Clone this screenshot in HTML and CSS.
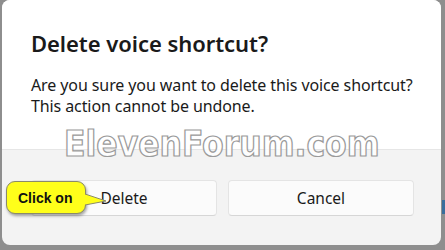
FILE: index.html
```html
<!DOCTYPE html>
<html>
<head>
<meta charset="utf-8">
<link rel="stylesheet" href="styles.css">
</head>
<body>
<div class="backdrop">
  <div class="dialog">
    <div class="content">
      <h1 class="title">Delete voice shortcut?</h1>
      <p class="message">Are you sure you want to delete this voice shortcut?<br>This action cannot be undone.</p>
    </div>
    <div class="footer">
      <button class="btn">Delete</button>
      <button class="btn">Cancel</button>
    </div>
    <div class="watermark">ElevenForum.com</div>
    <div class="callout">
      <span class="callout-text">Click on</span>
      <svg class="callout-tip" width="22" height="20" viewBox="0 0 22 20">
        <path d="M0 3 L21 10 L0 14" fill="#ffff1a" stroke="#8a8a6a" stroke-width="1"/>
      </svg>
    </div>
  </div>
  <div class="side-strip"></div>
</div>
</body>
</html>
```
FILE: styles.css
```css
html, body {
  margin: 0;
  padding: 0;
}
body {
  width: 445px;
  height: 250px;
  overflow: hidden;
  background: #8e8e8e;
  font-family: "Segoe UI", "Noto Sans", sans-serif;
}
.backdrop {
  display: flex;
  padding-left: 2px;
  height: 250px;
  box-sizing: border-box;
  position: relative;
}
.dialog {
  position: relative;
  width: 439px;
  height: 245px;
  border-radius: 8px;
  background: #f3f3f3;
  overflow: hidden;
  display: flex;
  flex-direction: column;
}
.content {
  background: #ffffff;
  height: 150px;
  box-sizing: border-box;
  padding: 28px 10px 0 29px;
  border-bottom: 1px solid #e6e6e6;
}
.title {
  margin: 0;
  font-size: 22px;
  line-height: 30px;
  font-weight: 600;
  color: #1a1a1a;
  letter-spacing: -0.05px;
}
.message {
  margin: 17px 0 0;
  font-size: 16px;
  line-height: 21px;
  color: #1a1a1a;
  white-space: nowrap;
  letter-spacing: -0.1px;
}
.footer {
  display: grid;
  grid-template-columns: 186px 186px;
  gap: 11px;
  padding: 30px 0 0 29px;
}
.btn {
  height: 36px;
  border: 1px solid #e4e4e4;
  border-bottom-color: #d6d6d6;
  border-radius: 4px;
  background: #fbfbfb;
  font-family: "Segoe UI", "Noto Sans", sans-serif;
  font-size: 15.5px;
  color: #1a1a1a;
  padding: 0 0 1px;
}
.watermark {
  position: absolute;
  left: 62px;
  top: 124px;
  font-family: "DejaVu Sans Condensed", "DejaVu Sans", sans-serif;
  font-weight: 700;
  font-size: 35px;
  line-height: 40px;
  color: rgba(255,255,255,0.9);
  -webkit-text-stroke: 1.2px #9a9a9a;
  letter-spacing: 0px;
}
.callout {
  position: absolute;
  left: 4px;
  top: 181px;
  width: 80px;
  height: 33px;
  background: #ffff1a;
  border: 1px solid #8a8a6a;
  border-radius: 9px;
  box-shadow: 1px 2px 3px rgba(0,0,0,0.35);
  display: flex;
  align-items: center;
  padding-left: 11px;
  box-sizing: border-box;
}
.callout-text {
  font-family: "Liberation Sans", Arial, sans-serif;
  font-weight: 700;
  font-size: 14px;
  color: #111;
}
.callout-tip {
  position: absolute;
  left: 78px;
  top: 9px;
}
.side-strip {
  position: absolute;
  right: 0;
  top: 200px;
  width: 3px;
  height: 14px;
  background: #3a6d9c;
}
```
